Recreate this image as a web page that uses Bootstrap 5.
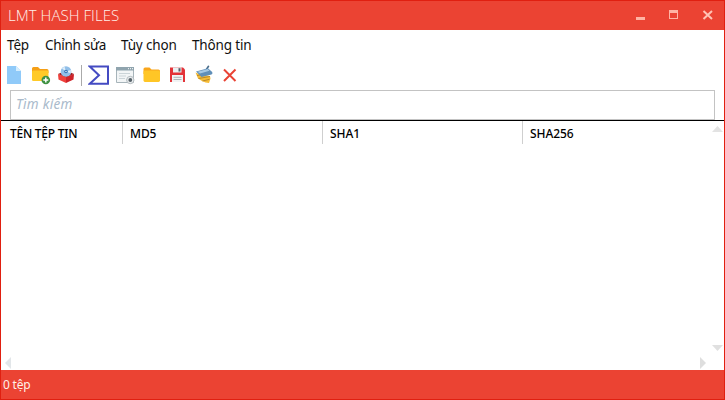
<!DOCTYPE html>
<html lang="vi">
<head>
<meta charset="utf-8">
<meta name="viewport" content="width=device-width, initial-scale=1">
<title>LMT Hash Files</title>
<link href="https://cdn.jsdelivr.net/npm/bootstrap@5.3.0/dist/css/bootstrap.min.css" rel="stylesheet">
<style>
body{font-family:"Noto Sans","Open Sans",sans-serif;color:#111;overflow:hidden}
svg{display:block}
.app-window{height:400px;border:1px solid #e01f10}
.title-strip{height:29px;background:#eb4333;color:#fff0ea;padding:0 10px 0 7px}
.app-name{font-family:"Open Sans","Noto Sans",sans-serif;font-weight:300;font-size:15px;letter-spacing:.05px;line-height:28px}
.menu-strip{height:30px;font-size:13.5px;line-height:30px}
.menu-strip a{color:#111;letter-spacing:-.15px;white-space:nowrap}
.m1{width:38px;margin-left:6px}.m2{width:76px}.m3{width:71px}
.menu-strip .m2{letter-spacing:-.3px}
.tool-strip{height:30px;display:grid;grid-template-columns:25px 26px 24px 7px 27px 27px 27px 25px 28px 20px;padding:5px 0 0 5px}
.tool-sep{width:1px;height:21px;background:#aaa}
.search-wrap{height:30px;padding:0 9px}
.search-box.form-control{height:30px;font-size:13.5px;font-style:italic;border:1px solid #c3c3c3;padding:0 5px 2px;letter-spacing:.3px}
.search-box::placeholder{color:#a9bacb}
.head-strip{height:24px;border-top:1px solid #000;font-size:12px;font-weight:500;line-height:25px;color:#000}
.head-strip>div{border-right:1px solid #cfcfcf;padding-left:7px;white-space:nowrap;letter-spacing:-.1px}
.c0{width:122px}.head-strip .c0{padding-left:9px;letter-spacing:-.25px}.c1{width:200px}
.head-strip>div:last-child{border:0}
.list-area{margin-top:-23px;height:249px}
.v-scroll{width:12px;padding:5px 0 19px}
.h-scroll{bottom:1px;left:0;width:708px;padding:0 3px 0 4px}
.status-strip{height:29px;background:#eb4333;color:#fff0e8;font-size:12px;line-height:30px;padding-left:2px;letter-spacing:-.2px}
</style>
<script src="https://cdn.jsdelivr.net/npm/bootstrap@5.3.0/dist/js/bootstrap.bundle.min.js"></script>
</head>
<body>
<main class="app-window d-flex flex-column bg-white">
<header class="title-strip d-flex justify-content-between align-items-start">
<span class="app-name">LMT HASH FILES</span>
<svg width="78" height="28" viewBox="0 0 78 28"><g fill="#ffb3a3"><path d="M0 16h9v3H0z"/><path fill-rule="evenodd" d="M33 9h9v9h-9zm1 3v5h7v-5z"/></g><path d="M67.500 10l8.500 8M76 10l-8.500 8" stroke="#ffc3b5" stroke-width="2" fill="none"/></svg>
</header>
<nav class="menu-strip d-flex">
<a class="text-decoration-none m1">Tệp</a><a class="text-decoration-none m2">Chỉnh sửa</a><a class="text-decoration-none m3">Tùy chọn</a><a class="text-decoration-none">Thông tin</a>
</nav>
<div class="tool-strip">
<svg width="16" height="20"><path d="M1 1h9l5 5v13H1z" fill="#90caf9"/><path d="M10 1l5 5h-5z" fill="#d5eefe"/></svg>
<svg width="20" height="20"><path d="M1 3.500q0-1.500 1.500-1.500H7l2 2h7q1.500 0 1.500 1.500V8H1z" fill="#f59f16"/><rect x="1" y="5.500" width="16.500" height="10.500" rx="1.300" fill="#ffca28"/><circle cx="14.800" cy="15" r="4.300" fill="#3f9142"/><path d="M12.300 15h5M14.800 12.500v5" stroke="#fff" stroke-width="1.500"/></svg>
<svg width="18" height="20"><path d="M1 9l8-3.500L17 9l-8 4z" fill="#9f2024"/><circle cx="9" cy="6.500" r="5.300" fill="#91bfe8"/><path d="M9 6.500L5 3.500 7.500 1.600zM9 6.500l4.700 1.800.2-3.300z" fill="#dcedfa"/><circle cx="9" cy="6.500" r="1.800" fill="#2e6fb4"/><circle cx="9" cy="6.500" r=".7" fill="#fff"/><path d="M1 9l8 3.200V18l-7.500-3.500z" fill="#ef403b"/><path d="M17 9l-8 3.200V18l7.500-3.500z" fill="#ce2329"/></svg>
<span class="tool-sep"></span>
<svg width="22" height="20"><path d="M1.800 1.500H20v17.300H1.800L11 10.200z" fill="#fff" stroke="#444bc2" stroke-width="2"/></svg>
<svg width="21" height="20"><path d="M1.500 2.500h17v15h-17z" fill="#f2f5f6" stroke="#a7b4ba"/><path d="M1 2h18v3.500H1z" fill="#90a4ae"/><path d="M13 3.700h1m1 0h1m1 0h1" stroke="#fff"/><path d="M4 8.500h11M4 11h7M4 13.500h6" stroke="#cbd4d8"/><circle cx="15.300" cy="15" r="3.700" fill="#e9edef" stroke="#b5bcc0"/><circle cx="15.300" cy="15" r="1.900" fill="#59646b"/></svg>
<svg width="19" height="20"><path d="M1.500 4q0-1.500 1.500-1.500h4.500l2 2h7q1.500 0 1.500 1.500v3H1.500z" fill="#f9a51b"/><rect x="1.500" y="5.500" width="16.500" height="11.500" rx="1.400" fill="#ffc626"/></svg>
<svg width="17" height="20"><path d="M1 2.500h13L16 4.500V17H1z" fill="#e33339"/><path d="M4 2.500h8.500v5H4z" fill="#eceff1"/><path d="M9.500 3.200h2v3.300h-2z" fill="#52616a"/><path d="M3 10h11v7H3z" fill="#f1f3f4"/><path d="M4.500 12.300h8M4.500 14.500h8" stroke="#adb5b9"/></svg>
<svg width="20" height="20"><path d="M12 5L14.500 1.300" stroke="#486b89" stroke-width="1.600" stroke-linecap="round"/><path d="M1.500 7.500L5 9l11 2 .5 2.500-1.500 4.500-3.500-.5-3.500-1.500-4-2.500z" fill="#f6bc35"/><path d="M3 10.500l12-2M4.500 13.500l11.500-2M8.500 16l7-1.700" stroke="#a77b28" stroke-width=".8"/><path d="M2 6.500l12-3.200 4.200 3.700q.8 1.500-.7 2.500L7.500 12z" fill="#608fb8"/><path d="M3.500 6.700l10.300-2.600 1.700 1.700L6 8.500z" fill="#a5c9e4"/></svg>
<svg width="16" height="20"><path d="M2 4.500l11.500 11.500M13.500 4.500L2 16" stroke="#e94335" stroke-width="2" fill="none"/></svg>
</div>
<div class="search-wrap"><input class="search-box form-control rounded-0 shadow-none" placeholder="Tìm kiếm" aria-label="Tìm kiếm"></div>
<div class="head-strip d-flex flex-shrink-0"><div class="c0">TÊN TỆP TIN</div><div class="c1">MD5</div><div class="c1">SHA1</div><div>SHA256</div></div>
<section class="list-area position-relative d-flex justify-content-end">
<div class="v-scroll d-flex flex-column justify-content-between"><svg width="11" height="6"><path d="M0 6L5.500 0 11 6z" fill="#e3e3e3"/></svg><svg width="11" height="6"><path d="M0 0h11L5.500 6z" fill="#e0e0e0"/></svg></div>
<div class="h-scroll position-absolute d-flex justify-content-between"><svg width="6" height="12"><path d="M6 0v12L0 6z" fill="#e2e6e9"/></svg><svg width="6" height="12"><path d="M0 0v12l6-6z" fill="#dedede"/></svg></div>
</section>
<footer class="status-strip mt-auto flex-shrink-0">0 tệp</footer>
</main>
</body>
</html>
